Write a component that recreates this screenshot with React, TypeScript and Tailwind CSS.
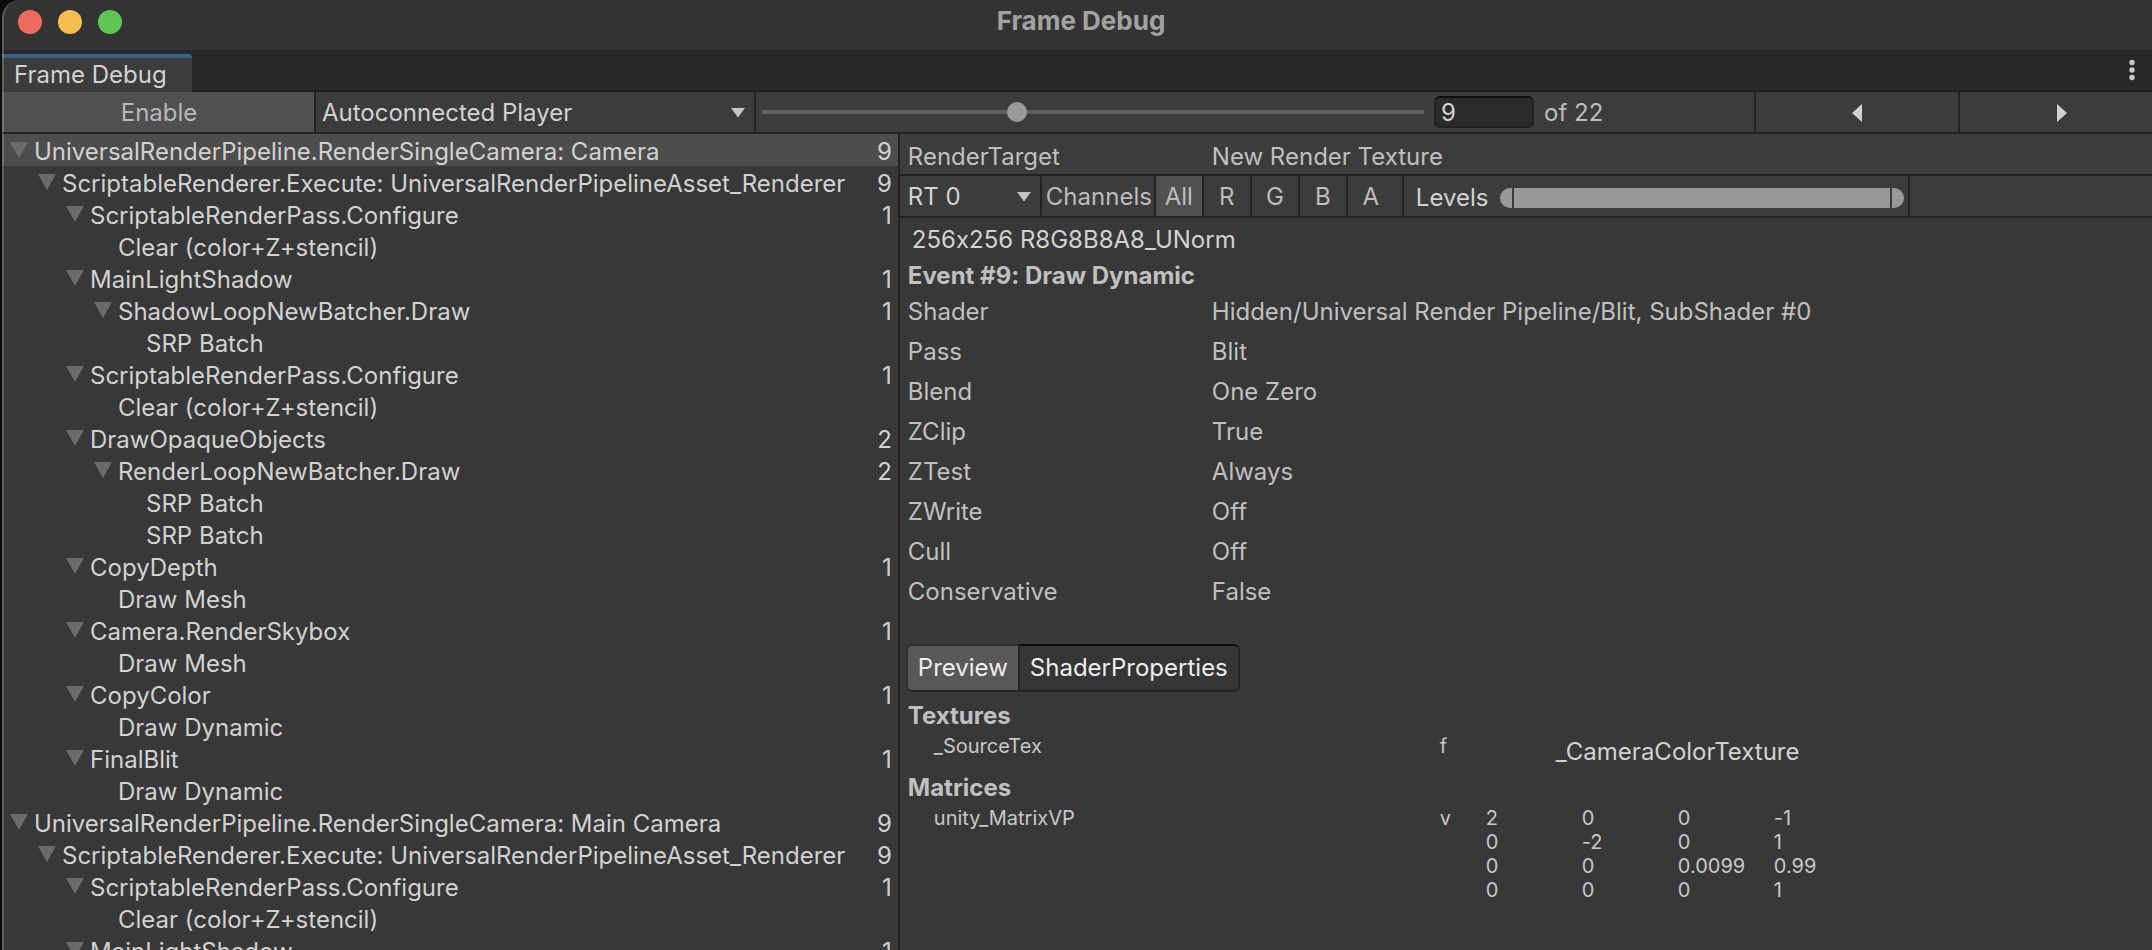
import React from "react";

type Node = { depth: number; label: string; count?: number; selected?: boolean };

const tree: Node[] = [
  { depth: 0, label: "UniversalRenderPipeline.RenderSingleCamera: Camera", count: 9, selected: true },
  { depth: 1, label: "ScriptableRenderer.Execute: UniversalRenderPipelineAsset_Renderer", count: 9 },
  { depth: 2, label: "ScriptableRenderPass.Configure", count: 1 },
  { depth: 3, label: "Clear (color+Z+stencil)" },
  { depth: 2, label: "MainLightShadow", count: 1 },
  { depth: 3, label: "ShadowLoopNewBatcher.Draw", count: 1 },
  { depth: 4, label: "SRP Batch" },
  { depth: 2, label: "ScriptableRenderPass.Configure", count: 1 },
  { depth: 3, label: "Clear (color+Z+stencil)" },
  { depth: 2, label: "DrawOpaqueObjects", count: 2 },
  { depth: 3, label: "RenderLoopNewBatcher.Draw", count: 2 },
  { depth: 4, label: "SRP Batch" },
  { depth: 4, label: "SRP Batch" },
  { depth: 2, label: "CopyDepth", count: 1 },
  { depth: 3, label: "Draw Mesh" },
  { depth: 2, label: "Camera.RenderSkybox", count: 1 },
  { depth: 3, label: "Draw Mesh" },
  { depth: 2, label: "CopyColor", count: 1 },
  { depth: 3, label: "Draw Dynamic" },
  { depth: 2, label: "FinalBlit", count: 1 },
  { depth: 3, label: "Draw Dynamic" },
  { depth: 0, label: "UniversalRenderPipeline.RenderSingleCamera: Main Camera", count: 9 },
  { depth: 1, label: "ScriptableRenderer.Execute: UniversalRenderPipelineAsset_Renderer", count: 9 },
  { depth: 2, label: "ScriptableRenderPass.Configure", count: 1 },
  { depth: 3, label: "Clear (color+Z+stencil)" },
  { depth: 2, label: "MainLightShadow", count: 1 },
];

const indents = ["pl-2", "pl-9", "pl-16", "pl-[92px]", "pl-[120px]"];

const properties: [string, string][] = [
  ["Shader", "Hidden/Universal Render Pipeline/Blit, SubShader #0"],
  ["Pass", "Blit"],
  ["Blend", "One Zero"],
  ["ZClip", "True"],
  ["ZTest", "Always"],
  ["ZWrite", "Off"],
  ["Cull", "Off"],
  ["Conservative", "False"],
];

const matrix = [
  ["2", "0", "0", "-1"],
  ["0", "-2", "0", "1"],
  ["0", "0", "0.0099", "0.99"],
  ["0", "0", "0", "1"],
];

function Caret() {
  return (
    <svg viewBox="0 0 14 10" className="pointer-events-none absolute right-[9px] top-4 h-[10px] w-[14px] fill-[#c4c4c4]" aria-hidden="true">
      <path d="M0 0h14L7 9.6z" />
    </svg>
  );
}

function TitleBar() {
  return (
    <header className="grid h-[50px] grid-cols-3 items-start bg-[#333333] pl-4 pr-2 pt-[10px]">
      <div className="flex gap-4">
        <button aria-label="Close" className="size-6 rounded-full bg-[#ed6a5e]" />
        <button aria-label="Minimize" className="size-6 rounded-full bg-[#f5bf4f]" />
        <button aria-label="Zoom" className="size-6 rounded-full bg-[#61c554]" />
      </div>
      <h1 className="text-center text-[26px] font-bold leading-[22px] text-[#a3a3a3]">Frame Debug</h1>
    </header>
  );
}

function TabStrip() {
  return (
    <div className="flex h-[42px] items-end justify-between border-b-2 border-[#202020] bg-[#282828]">
      <button className="-mb-[2px] h-[38px] w-[190px] rounded-tr border-t-4 border-[#3a6188] bg-[#3c3c3c] pl-3 text-left leading-8">
        Frame Debug
      </button>
      <button aria-label="Window menu" className="mr-[10px] flex h-10 w-5 items-center justify-center">
        <svg viewBox="0 0 6 22" className="h-[22px] w-[6px] fill-[#c9c9c9]" aria-hidden="true">
          <circle cx="3" cy="3.5" r="2.7" />
          <circle cx="3" cy="11" r="2.7" />
          <circle cx="3" cy="18.5" r="2.7" />
        </svg>
      </button>
    </div>
  );
}

function Toolbar() {
  return (
    <div className="flex h-[42px] border-b-2 border-[#232323] bg-[#3c3c3c]">
      <button className="w-[314px] shrink-0 border-r-2 border-[#232323] bg-[#505050] pl-[2px] pt-[2px] text-[#b9b9b9]">Enable</button>
      <div className="relative w-[440px] shrink-0 border-r-2 border-[#232323]">
        <select aria-label="Connection" className="h-10 w-full appearance-none bg-transparent pl-[6px] pt-[2px] outline-none">
          <option>Autoconnected Player</option>
        </select>
        <Caret />
      </div>
      <input
        type="range"
        aria-label="Event"
        min={1}
        max={22}
        defaultValue={9}
        className="my-auto ml-[6px] h-5 min-w-0 flex-1 appearance-none bg-transparent [&::-webkit-slider-runnable-track]:h-1 [&::-webkit-slider-runnable-track]:bg-[#5e5e5e] [&::-webkit-slider-thumb]:-mt-2 [&::-webkit-slider-thumb]:size-5 [&::-webkit-slider-thumb]:appearance-none [&::-webkit-slider-thumb]:rounded-full [&::-webkit-slider-thumb]:bg-[#999999]"
      />
      <input
        type="text"
        id="event-index"
        aria-label="Event number"
        defaultValue="9"
        className="ml-[10px] mt-1 h-8 w-[100px] rounded-md border-2 border-[#212121] border-t-[#0d0d0d] bg-[#2a2a2a] pl-[5px] leading-7 outline-none"
      />
      <label htmlFor="event-index" className="w-[220px] shrink-0 pl-[10px] pt-[1px] leading-10 text-[#bdbdbd]">
        of 22
      </label>
      <button aria-label="Previous event" className="flex w-[204px] shrink-0 items-center justify-center border-l-2 border-[#232323] pt-[2px]">
        <svg viewBox="0 0 10 18" className="h-[18px] w-[10px] fill-[#d2d2d2]" aria-hidden="true">
          <path d="M10 0v18L0 9z" />
        </svg>
      </button>
      <button aria-label="Next event" className="flex w-[194px] shrink-0 items-center justify-center border-l-2 border-[#232323] pl-3 pt-[2px]">
        <svg viewBox="0 0 10 18" className="h-[18px] w-[10px] fill-[#d2d2d2]" aria-hidden="true">
          <path d="M0 0v18l10-9z" />
        </svg>
      </button>
    </div>
  );
}

function EventTree() {
  return (
    <ul className="min-h-0 overflow-hidden">
      {tree.map((node, i) => (
        <li key={i}>
          <button
            className={`flex h-8 w-full items-center whitespace-nowrap pr-[6px] text-left leading-7 ${indents[node.depth]} ${node.selected ? "bg-[#4d4d4d]" : ""}`}
          >
            <span className="w-6 shrink-0">
              {node.count !== undefined && (
                <svg viewBox="0 0 18 16" className="h-4 w-[18px] fill-[#6b6b6b]" aria-hidden="true">
                  <path d="M0 0h18L9 16z" />
                </svg>
              )}
            </span>
            <span className="flex-1 pt-1">{node.label}</span>
            {node.count !== undefined && <span className="pt-1">{node.count}</span>}
          </button>
        </li>
      ))}
    </ul>
  );
}

function TargetToolbar() {
  const channel = "w-12 shrink-0 border-r-2 border-[#232323] pt-[2px]";
  return (
    <div className="flex h-[42px] border-b-2 border-[#232323] bg-[#3c3c3c] text-[#bdbdbd]">
      <div className="relative w-[142px] shrink-0 border-r-2 border-[#232323]">
        <select aria-label="Render target" className="h-10 w-full appearance-none bg-transparent pl-2 pt-[2px] text-[#d2d2d2] outline-none">
          <option>RT 0</option>
        </select>
        <Caret />
      </div>
      <span className="w-[114px] shrink-0 border-r-2 border-[#232323] pl-1 pt-[1px] leading-10">Channels</span>
      <button className={`${channel} bg-[#505050]`}>All</button>
      <button className={channel}>R</button>
      <button className={channel}>G</button>
      <button className={channel}>B</button>
      <button className="w-[56px] shrink-0 border-r-2 border-[#232323] pr-2 pt-[2px]">A</button>
      <div className="flex w-[506px] shrink-0 items-center border-r-2 border-[#232323] pl-3 pt-1">
        <span className="w-[84px] text-[#d2d2d2]">Levels</span>
        <div className="relative h-5 w-[404px]">
          <div className="mx-[14px] h-5 bg-[#999999]" />
          <input
            type="range"
            aria-label="Minimum level"
            defaultValue={0}
            className="absolute inset-0 h-5 w-full appearance-none bg-transparent [&::-webkit-slider-thumb]:h-5 [&::-webkit-slider-thumb]:w-3 [&::-webkit-slider-thumb]:appearance-none [&::-webkit-slider-thumb]:rounded-l-full [&::-webkit-slider-thumb]:bg-[#999999]"
          />
          <input
            type="range"
            aria-label="Maximum level"
            defaultValue={100}
            className="absolute inset-0 h-5 w-full appearance-none bg-transparent [&::-webkit-slider-thumb]:h-5 [&::-webkit-slider-thumb]:w-3 [&::-webkit-slider-thumb]:appearance-none [&::-webkit-slider-thumb]:rounded-r-full [&::-webkit-slider-thumb]:bg-[#999999]"
          />
        </div>
      </div>
    </div>
  );
}

function Details() {
  return (
    <section className="min-w-0 border-l-2 border-[#232323] text-[#c0c0c0]">
      <div className="flex h-[42px] border-b-2 border-[#232323] bg-[#3c3c3c] pl-2 pt-[3px] leading-10">
        <span className="w-[304px]">RenderTarget</span>
        <span>New Render Texture</span>
      </div>
      <TargetToolbar />
      <div className="pl-2">
        <p className="pl-1 pt-[2px] leading-10 text-[#d2d2d2]">256x256 R8G8B8A8_UNorm</p>
        <h2 className="font-bold leading-8">Event #9: Draw Dynamic</h2>
        <dl>
          {properties.map(([name, value]) => (
            <div key={name} className="flex leading-10">
              <dt className="w-[304px]">{name}</dt>
              <dd>{value}</dd>
            </div>
          ))}
        </dl>
        <div className="-ml-[2px] mt-8 flex h-12 text-[#eeeeee]">
          <button className="w-[112px] rounded-l-md border-2 border-r-0 border-[#303030] border-b-[#242424] bg-[#585858]">Preview</button>
          <button className="w-[222px] rounded-r-md border-2 border-[#242424] border-t-[#0d0d0d] bg-[#353535]">ShaderProperties</button>
        </div>
        <h2 className="pt-2 font-bold leading-8">Textures</h2>
        <div className="flex h-10 pl-[26px] text-xl leading-7 text-[#c8c8c8]">
          <span className="w-[506px]">_SourceTex</span>
          <span className="w-[116px]">f</span>
          <span className="pt-1 text-2xl text-[#d2d2d2]">_CameraColorTexture</span>
        </div>
        <h2 className="font-bold leading-8">Matrices</h2>
        <div className="flex pl-[26px] pt-[2px] text-xl leading-6 text-[#c8c8c8]">
          <span className="w-[506px]">unity_MatrixVP</span>
          <span className="w-[46px]">v</span>
          <table>
            <tbody>
              {matrix.map((row, r) => (
                <tr key={r}>
                  {row.map((value, c) => (
                    <td key={c} className="w-24 min-w-24 p-0">
                      {value}
                    </td>
                  ))}
                </tr>
              ))}
            </tbody>
          </table>
        </div>
      </div>
    </section>
  );
}

export default function App() {
  return (
    <div className="h-screen bg-[#0d0d0d] pl-[2px]">
      <main className="relative flex h-full flex-col overflow-hidden rounded-tl-[18px] bg-[#383838] font-[Inter,sans-serif] text-2xl text-[#d2d2d2] [font-feature-settings:'calt'_0]">
        <TitleBar />
        <TabStrip />
        <Toolbar />
        <div className="grid min-h-0 flex-1 grid-cols-[5fr_7fr]">
          <EventTree />
          <Details />
        </div>
        <div className="pointer-events-none absolute inset-0 rounded-tl-[18px] border-l-2 border-white/20" aria-hidden="true" />
      </main>
    </div>
  );
}
